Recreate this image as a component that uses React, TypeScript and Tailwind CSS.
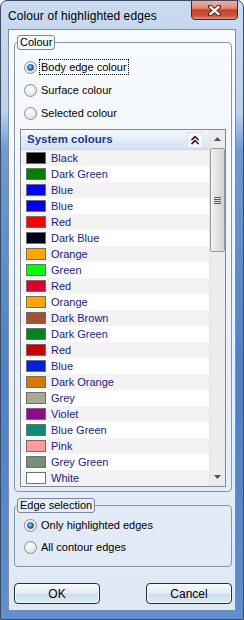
import React from "react";

const rows: [string, string][] = [
  ["Black", "#000000"],
  ["Dark Green", "#008000"],
  ["Blue", "#0000ff"],
  ["Blue", "#0000f0"],
  ["Red", "#ff0000"],
  ["Dark Blue", "#00001e"],
  ["Orange", "#ffa500"],
  ["Green", "#00ff00"],
  ["Red", "#dc0028"],
  ["Orange", "#ffa500"],
  ["Dark Brown", "#a0522d"],
  ["Dark Green", "#00841e"],
  ["Red", "#c80000"],
  ["Blue", "#0020e0"],
  ["Dark Orange", "#d47a00"],
  ["Grey", "#a9a998"],
  ["Violet", "#8c0a8c"],
  ["Blue Green", "#0a8c7a"],
  ["Pink", "#ff9a9a"],
  ["Grey Green", "#7a8e78"],
  ["White", "#ffffff"],
];

function Radio({ checked }: { checked: boolean }) {
  return (
    <span className="w-[13px] h-[13px] rounded-full border border-[#8e8f8f] bg-[radial-gradient(circle_at_40%_35%,#ffffff,#d8d8d8)] flex items-center justify-center shrink-0">
      {checked && (
        <span className="w-[7px] h-[7px] rounded-full border border-[#1b4c7a] bg-[radial-gradient(circle_at_40%_35%,#9fe0ff,#1f7ccf_55%,#0c4c92)]" />
      )}
    </span>
  );
}

function RadioRow({ checked, label, focus, className }: { checked: boolean; label: string; focus?: boolean; className?: string }) {
  return (
    <div className={"flex items-center h-[16px] pl-[9px] " + (className ?? "")}>
      <Radio checked={checked} />
      <span className={"ml-[3px] px-[1px] leading-[14px] text-[11px] text-black " + (focus ? "outline outline-1 outline-dotted outline-black" : "")}>
        {label}
      </span>
    </div>
  );
}

function Button({ label }: { label: string }) {
  return (
    <div className="w-[86px] h-[21px] rounded-[4px] border border-[#2b2b2b] bg-[linear-gradient(to_bottom,#f5f8fc_0%,#e6eef8_45%,#cfdff1_55%,#dce8f5_100%)] flex items-center justify-center text-[12px] text-black shadow-[inset_0_0_0_1px_#f8fbff]">
      {label}
    </div>
  );
}

export default function App() {
  return (
    <div className="w-[244px] h-[620px] flex flex-col rounded-t-[7px] border border-[#3a4a62] bg-[linear-gradient(to_bottom,#c9dbf0_0%,#bcd1eb_18%,#6f9bd3_24%,#4f80c2_60%,#5f8fcc_100%)] font-['Liberation_Sans',Arial,sans-serif] overflow-hidden">
      {/* Title bar */}
      <div className="relative h-[28px] flex items-center pl-[7px] pt-[2px]">
        <span className="text-[12px] text-black tracking-[0.1px]">Colour of highlighted edges</span>
        <div className="absolute right-[5px] top-[-1px] w-[47px] h-[20px] rounded-b-[4px] border border-[#5a2118] bg-[linear-gradient(to_bottom,#eeb1a3_0%,#dc8a75_40%,#c2412a_50%,#cf5a40_85%,#e09a80_100%)] flex items-center justify-center">
          <svg width="13" height="11" viewBox="0 0 13 11">
            <path d="M2 1.5 L11 9.5 M11 1.5 L2 9.5" stroke="#4a1d16" strokeWidth="4" strokeLinecap="round" />
            <path d="M2.3 1.8 L10.7 9.2 M10.7 1.8 L2.3 9.2" stroke="#ffffff" strokeWidth="2.2" strokeLinecap="round" />
          </svg>
        </div>
      </div>

      {/* Client area */}
      <div className="ml-[7px] w-[228px] h-[582px] border border-[#7b8fa9] bg-[linear-gradient(to_bottom,#f8fbfe_0%,#eef3fa_40%,#dee8f5_100%)] flex flex-col">
        {/* Colour group */}
        <div className="relative mt-[12px] ml-[5px] w-[218px] h-[450px] rounded-[4px] border border-[#8795a6] flex flex-col">
          <div className="absolute left-[2px] top-[-8px] h-[15px] px-[2px] rounded-[3px] border border-[#7c8797] bg-[#f5f8fc] text-[11px] leading-[13px] text-black">
            Colour
          </div>
          <RadioRow checked label="Body edge colour" focus className="mt-[16px]" />
          <RadioRow checked={false} label="Surface colour" className="mt-[7px]" />
          <RadioRow checked={false} label="Selected colour" className="mt-[7px]" />

          {/* List */}
          <div className="mt-[8px] ml-[5px] w-[206px] h-[358px] border border-[#828790] bg-white flex">
            <div className="w-[188px] flex flex-col">
              <div className="h-[20px] flex items-center pl-[6px] pr-[6px] bg-[linear-gradient(to_bottom,#f4f8fd_0%,#e3edf9_50%,#d4e3f5_100%)] border-b border-[#c6d6ea]">
                <span className="text-[11.5px] font-bold text-[#1b3a8c]">System colours</span>
                <span className="ml-auto w-[16px] h-[16px] border border-[#d8e2ee] bg-[#f4f7fb] flex items-center justify-center">
                  <svg width="10" height="10" viewBox="0 0 10 10">
                    <path d="M1.5 5 L5 1.5 L8.5 5" stroke="#d98aa0" strokeWidth="1" fill="none" transform="translate(0.6,0.6)" />
                    <path d="M1.5 9 L5 5.5 L8.5 9" stroke="#d98aa0" strokeWidth="1" fill="none" transform="translate(0.6,0.6)" />
                    <path d="M1.5 5 L5 1.5 L8.5 5" stroke="#111" strokeWidth="1.4" fill="none" />
                    <path d="M1.5 9 L5 5.5 L8.5 9" stroke="#111" strokeWidth="1.4" fill="none" />
                  </svg>
                </span>
              </div>
              {rows.map(([name, color], i) => (
                <div key={i} className={"h-[16px] flex items-center pl-[5px] " + (i % 2 === 0 ? "bg-[#f3f3f3]" : "bg-white")}>
                  <span className="w-[20px] h-[12px] border border-[#6f6f6f] shrink-0" style={{ backgroundColor: color }} />
                  <span className="ml-[5px] text-[11px] leading-[14px] text-[#1a1a8c]">{name}</span>
                </div>
              ))}
            </div>
            {/* Scrollbar */}
            <div className="w-[16px] bg-[#ececec] border-l border-[#e4e4e4] flex flex-col items-center">
              <div className="h-[18px] w-full flex items-center justify-center">
                <svg width="7" height="4" viewBox="0 0 7 4"><path d="M0 4 L3.5 0 L7 4 Z" fill="#4d4d4d" /></svg>
              </div>
              <div className="w-[15px] h-[104px] rounded-[2px] border border-[#9a9a9a] bg-[linear-gradient(to_right,#f2f2f2,#e2e2e2_50%,#d2d2d2)] flex flex-col items-center justify-center gap-[1px]">
                <span className="w-[7px] h-[1px] bg-[#555]" />
                <span className="w-[7px] h-[1px] bg-[#555]" />
                <span className="w-[7px] h-[1px] bg-[#555]" />
                <span className="w-[7px] h-[1px] bg-[#555]" />
              </div>
              <div className="flex-1" />
              <div className="h-[18px] w-full flex items-center justify-center">
                <svg width="7" height="4" viewBox="0 0 7 4"><path d="M0 0 L3.5 4 L7 0 Z" fill="#4d4d4d" /></svg>
              </div>
            </div>
          </div>
        </div>

        {/* Edge selection group */}
        <div className="relative mt-[13px] ml-[5px] w-[218px] h-[62px] rounded-[4px] border border-[#8795a6] flex flex-col">
          <div className="absolute left-[2px] top-[-8px] h-[15px] px-[2px] rounded-[3px] border border-[#7c8797] bg-[#e4ecf6] text-[11px] leading-[13px] text-black">
            Edge selection
          </div>
          <RadioRow checked label="Only highlighted edges" className="mt-[11px]" />
          <RadioRow checked={false} label="All contour edges" className="mt-[6px]" />
        </div>

        {/* Buttons */}
        <div className="mt-[16px] ml-[5px] w-[218px] flex justify-between">
          <Button label="OK" />
          <Button label="Cancel" />
        </div>
      </div>
    </div>
  );
}
